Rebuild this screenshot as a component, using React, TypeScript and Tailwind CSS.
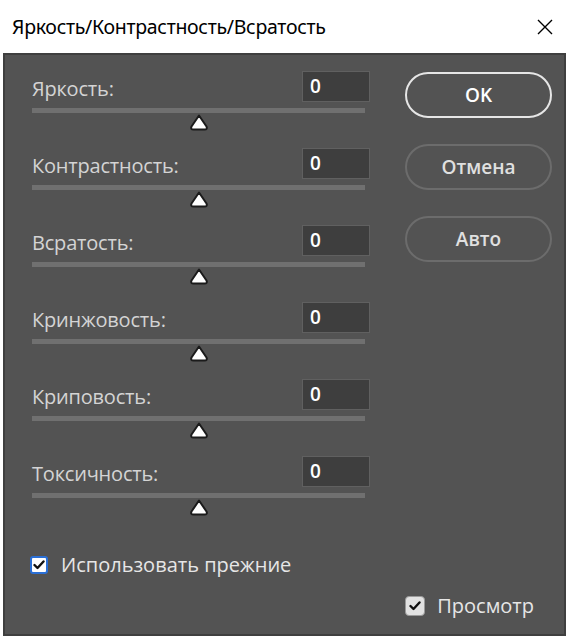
import React from 'react';

const sliders = ['Яркость:', 'Контрастность:', 'Всратость:', 'Кринжовость:', 'Криповость:', 'Токсичность:'];

function Thumb() {
  return (
    <svg width="22" height="19" viewBox="0 0 22 19">
      <path
        d="M11 2.5 L18.5 13.5 Q19.8 16.5 16.5 16.5 L5.5 16.5 Q2.2 16.5 3.5 13.5 Z"
        fill="#ffffff"
        stroke="#1b1b1b"
        strokeWidth="2"
        strokeLinejoin="round"
      />
    </svg>
  );
}

function Check({ className }: { className: string }) {
  return (
    <span className={className}>
      <svg width="12" height="10" viewBox="0 0 12 10">
        <path d="M1.5 5 L4.5 8 L10.5 1.5" fill="none" stroke="#111" strokeWidth="2.4" strokeLinecap="round" strokeLinejoin="round" />
      </svg>
    </span>
  );
}

function SliderRow({ label }: { label: string }) {
  return (
    <div className="flex flex-col h-[77px]">
      <div className="flex items-center justify-between h-[31px]">
        <span className="text-[20px] text-[#d4d4d4] leading-none pt-[4px] tracking-[-0.2px]">{label}</span>
        <div className="w-[68px] h-[31px] bg-[#3e3e3e] border border-[#606060] flex items-center pl-[7px] text-[19px] font-semibold text-white">
          0
        </div>
      </div>
      <div className="mt-[6px] h-[5px] w-[333px] bg-[#707070]" />
      <div className="w-[333px] flex justify-center">
        <Thumb />
      </div>
    </div>
  );
}

export default function App() {
  return (
    <div className="w-[570px] h-[640px] bg-white flex flex-col" style={{ fontFamily: '"Open Sans", "Noto Sans", sans-serif' }}>
      <div className="h-[53px] flex items-center justify-between pl-[12px] pr-[17px]">
        <span className="text-[19.5px] text-black tracking-[-0.3px]" style={{ fontFamily: '"Noto Sans", sans-serif' }}>
          Яркость/Контрастность/Всратость
        </span>
        <svg width="16" height="16" viewBox="0 0 16 16">
          <path d="M1 1 L15 15 M15 1 L1 15" stroke="#000" strokeWidth="1.4" />
        </svg>
      </div>
      <div className="ml-[3px] w-[563px] h-[583px] bg-[#535353] border-2 border-[#3f3f3f] flex flex-col">
        <div className="flex pt-[16px]">
          <div className="pl-[27px] w-[365px] flex flex-col">
            {sliders.map((s) => (
              <SliderRow key={s} label={s} />
            ))}
          </div>
          <div className="ml-[35px] flex flex-col gap-[26px] pt-[1px]">
            <button className="w-[147px] h-[46px] rounded-full border-2 border-[#e6e6e6] text-white text-[19px] font-semibold">
              OK
            </button>
            <button className="w-[147px] h-[46px] rounded-full border-2 border-[#6c6c6c] text-[#e0e0e0] text-[19px] font-semibold">
              Отмена
            </button>
            <button className="w-[147px] h-[46px] rounded-full border-2 border-[#6c6c6c] text-[#e0e0e0] text-[19px] font-semibold">
              Авто
            </button>
          </div>
        </div>
        <div className="flex items-center pl-[25px] mt-[22px] gap-[13px]">
          <Check className="w-[18px] h-[18px] rounded-[3px] bg-white border-2 border-[#2a6fd6] flex items-center justify-center" />
          <span className="text-[20px] text-[#e6e6e6] leading-none">Использовать прежние</span>
        </div>
        <div className="flex items-center justify-end pr-[30px] mt-[21px] gap-[12px]">
          <Check className="w-[20px] h-[20px] rounded-[4px] bg-[#e2e2e2] border border-[#9a9a9a] flex items-center justify-center" />
          <span className="text-[20px] text-[#e6e6e6] leading-none">Просмотр</span>
        </div>
      </div>
    </div>
  );
}
